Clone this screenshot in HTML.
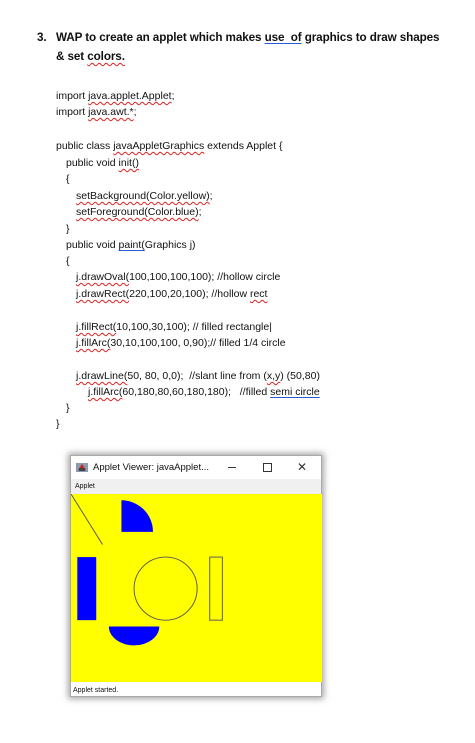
<!DOCTYPE html>
<html><head><meta charset="utf-8"><style>
body{margin:0;width:475px;height:743px;background:#fff;position:relative;overflow:hidden;font-family:"Liberation Sans",sans-serif;color:#111}
.t{position:absolute;white-space:nowrap;font-size:10.5px;line-height:12px}
.h{font-weight:bold;font-size:11.7px;line-height:15px;letter-spacing:-0.1px}
.sq{text-decoration:underline wavy #d22;text-decoration-thickness:1px;text-underline-offset:2px}
.bu{text-decoration:underline #2a5bd7;text-underline-offset:2px}
</style></head><body>
<div class="t h" style="left:37px;top:30px">3.</div>
<div class="t h" style="left:56px;top:30px">WAP to create an applet which makes <span class="bu">use&nbsp; of</span> graphics to draw shapes</div>
<div class="t h" style="left:56px;top:49px">&amp; set <span class="sq">colors.</span></div>

<div class="t" style="left:56px;top:90px">import <span class="sq">java.applet.Applet</span>;</div>
<div class="t" style="left:56px;top:106px">import <span class="sq">java.awt.*</span>;</div>
<div class="t" style="left:56px;top:140px">public class <span class="sq">javaAppletGraphics</span> extends Applet {</div>
<div class="t" style="left:66px;top:157px">public void <span class="sq">init()</span></div>
<div class="t" style="left:66px;top:173px">{</div>
<div class="t" style="left:76px;top:190px"><span class="sq">setBackground(Color.yellow)</span>;</div>
<div class="t" style="left:76px;top:206px"><span class="sq">setForeground(Color.blue)</span>;</div>
<div class="t" style="left:66px;top:223px">}</div>
<div class="t" style="left:66px;top:239px">public void <span class="bu">paint(</span>Graphics j)</div>
<div class="t" style="left:66px;top:255px">{</div>
<div class="t" style="left:76px;top:271px"><span class="sq">j.drawOval(</span>100,100,100,100); //hollow circle</div>
<div class="t" style="left:76px;top:288px"><span class="sq">j.drawRect(</span>220,100,20,100); //hollow <span class="sq">rect</span></div>
<div class="t" style="left:76px;top:321px"><span class="sq">j.fillRect(</span>10,100,30,100); // filled rectangle|</div>
<div class="t" style="left:76px;top:337px"><span class="sq">j.fillArc(</span>30,10,100,100, 0,90);// filled 1/4 circle</div>
<div class="t" style="left:76px;top:370px"><span class="sq">j.drawLine(</span>50, 80, 0,0);&nbsp; //slant line from (<span class="sq">x,y</span>) (50,80)</div>
<div class="t" style="left:88px;top:386px"><span class="sq">j.fillArc(</span>60,180,80,60,180,180);&nbsp;&nbsp; //filled <span class="bu">semi circle</span></div>
<div class="t" style="left:66px;top:402px">}</div>
<div class="t" style="left:56px;top:418px">}</div>

<div style="position:absolute;left:70px;top:455px;width:252px;height:242px;background:#fff;box-shadow:0 0 6px 2px rgba(0,0,0,0.35);border:1px solid #aaa;box-sizing:border-box">
  <div style="position:absolute;left:0;top:0;width:250px;height:23px;background:#fff">
    <svg style="position:absolute;left:5px;top:5px" width="12" height="12" viewBox="0 0 12 12"><rect x="0" y="2" width="12" height="9" fill="#8a9bb0"/><path d="M2 9 L6 3 L10 9Z" fill="#c22"/><rect x="3" y="7" width="6" height="3" fill="#444"/></svg>
    <div class="t" style="left:22px;top:6px;font-size:9.5px">Applet Viewer: javaApplet...</div>
    <div style="position:absolute;left:157px;top:11px;width:8px;height:1px;background:#333"></div>
    <div style="position:absolute;left:192px;top:7px;width:7px;height:7px;border:1px solid #333"></div>
    <div class="t" style="left:226px;top:5px;font-size:12px;color:#333">✕</div>
  </div>
  <div style="position:absolute;left:0;top:23px;width:250px;height:15px;background:#f0f0f0">
    <div class="t" style="left:4px;top:2px;font-size:7px">Applet</div>
  </div>
  <svg style="position:absolute;left:0;top:38px" width="251" height="188" viewBox="0 0 398 298" preserveAspectRatio="none">
    <rect width="398" height="298" fill="#ff0"/>
    <line x1="50" y1="80" x2="0" y2="0" stroke="#555" stroke-width="1.5"/>
    <path d="M80 60 L80 10 A50 50 0 0 1 130 60 Z" fill="#00f"/>
    <rect x="10" y="100" width="30" height="100" fill="#00f"/>
    <circle cx="150" cy="150" r="50" fill="none" stroke="#555" stroke-width="1.5"/>
    <rect x="220" y="100" width="20" height="100" fill="none" stroke="#555" stroke-width="1.5"/>
    <path d="M60 210 A40 30 0 0 0 140 210 Z" fill="#00f"/>
  </svg>
  <div class="t" style="left:2px;top:229px;font-size:7px">Applet started.</div>
</div>
</body></html>
